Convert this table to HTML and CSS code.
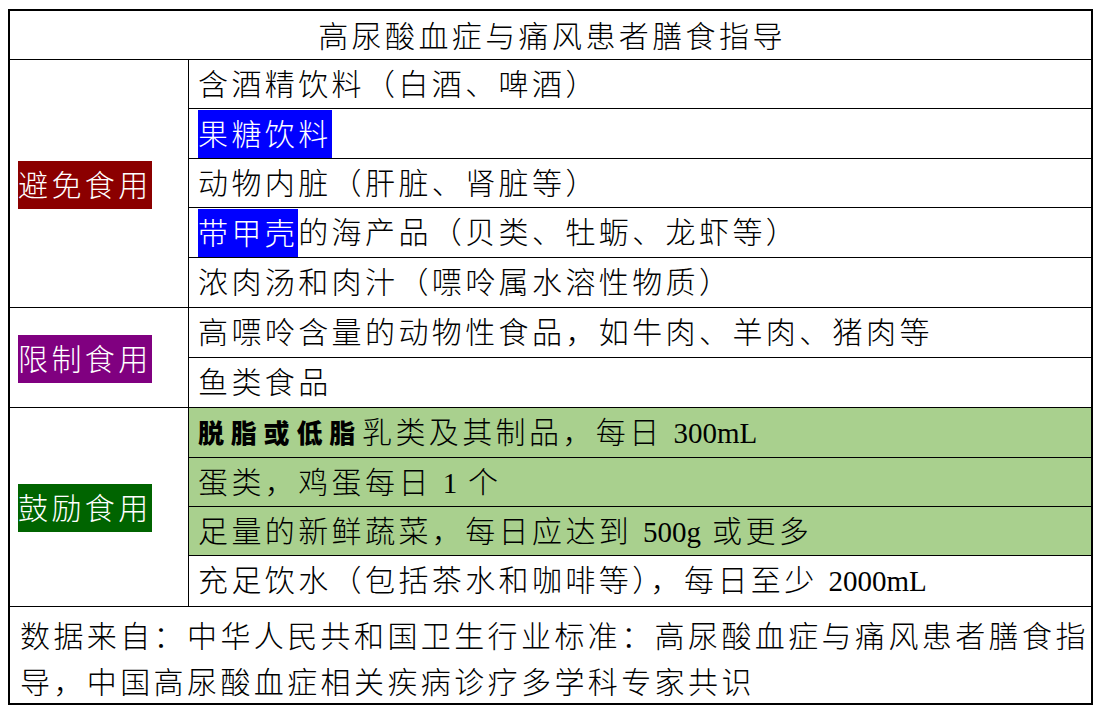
FILE: index.html
```html
<!DOCTYPE html>
<html lang="zh-CN">
<head>
<meta charset="utf-8">
<title>高尿酸血症与痛风患者膳食指导</title>
<link rel="stylesheet" href="styles.css">
</head>
<body>
<div class="sheet">
  <div class="title">高尿酸血症与痛风患者膳食指导</div>

  <div class="group">
    <div class="label"><span class="tag tag-red">避免食用</span></div>
    <div class="items">
      <div class="row">含酒精饮料（白酒、啤酒）</div>
      <div class="row"><span class="hl">果糖饮料</span></div>
      <div class="row">动物内脏（肝脏、肾脏等）</div>
      <div class="row"><span class="hl">带甲壳</span>的海产品（贝类、牡蛎、龙虾等）</div>
      <div class="row">浓肉汤和肉汁（嘌呤属水溶性物质）</div>
    </div>
  </div>

  <div class="group">
    <div class="label"><span class="tag tag-purple">限制食用</span></div>
    <div class="items">
      <div class="row">高嘌呤含量的动物性食品，如牛肉、羊肉、猪肉等</div>
      <div class="row">鱼类食品</div>
    </div>
  </div>

  <div class="group">
    <div class="label"><span class="tag tag-green">鼓励食用</span></div>
    <div class="items">
      <div class="row green"><b class="heavy">脱脂或低脂</b>乳类及其制品，每日 <span class="num">300mL</span></div>
      <div class="row green">蛋类，鸡蛋每日 <span class="num">1</span> 个</div>
      <div class="row green">足量的新鲜蔬菜，每日应达到 <span class="num">500g</span> 或更多</div>
      <div class="row">充足饮水（包括茶水和咖啡等），每日至少 <span class="num">2000mL</span></div>
    </div>
  </div>

  <div class="footer">
    <div class="line">数据来自：中华人民共和国卫生行业标准：高尿酸血症与痛风患者膳食指</div>
    <div class="line">导，中国高尿酸血症相关疾病诊疗多学科专家共识</div>
  </div>
</div>
</body>
</html>
```

FILE: styles.css
```css
html, body {
  margin: 0;
  padding: 0;
  background: #ffffff;
}

body {
  font-family: "Liberation Serif", "Noto Sans CJK SC", serif;
  font-size: 30px;
  font-weight: 300;
  color: #000000;
  letter-spacing: 3.4px;
}

.sheet {
  box-sizing: border-box;
  width: 1085px;
  margin: 9px 0 0 8px;
  border: 2px solid #000000;
}

.title {
  box-sizing: border-box;
  height: 49px;
  line-height: 48px;
  padding-top: 2px;
  border-bottom: 1px solid #000000;
  text-align: center;
  padding-left: 3px;
}

.group {
  display: flex;
  border-bottom: 1px solid #000000;
}

.label {
  box-sizing: border-box;
  width: 179px;
  flex: none;
  border-right: 1px solid #000000;
  display: flex;
  align-items: center;
  padding-left: 8px;
  padding-top: 2px;
}

.tag {
  display: inline-block;
  color: #ffffff;
  line-height: 50px;
  height: 48px;
  width: 134px;
  overflow: hidden;
  letter-spacing: 3.4px;
}

.tag-red { background: #8b0000; }
.tag-purple { background: #800080; }
.tag-green { background: #006400; }

.items {
  flex: 1;
  display: flex;
  flex-direction: column;
}

.row {
  box-sizing: border-box;
  height: 49.45px;
  line-height: 46.45px;
  padding-top: 2px;
  border-bottom: 1px solid #000000;
  padding-left: 9px;
  white-space: nowrap;
}

.row:last-child {
  border-bottom: none;
}

.green {
  background: #a9d08e;
}

.hl {
  display: inline-block;
  vertical-align: top;
  margin-top: -1px;
  background: #0000ff;
  color: #ffffff;
  line-height: 50px;
  height: 48px;
  overflow: hidden;
}

.heavy {
  font-weight: 900;
  font-size: 26px;
  letter-spacing: 6.8px;
}

.num {
  letter-spacing: 0;
  font-size: 29px;
  font-weight: 400;
}

.footer {
  padding: 7px 0 0 10px;
  height: 89px;
}

.line {
  line-height: 46px;
  white-space: nowrap;
}
```
